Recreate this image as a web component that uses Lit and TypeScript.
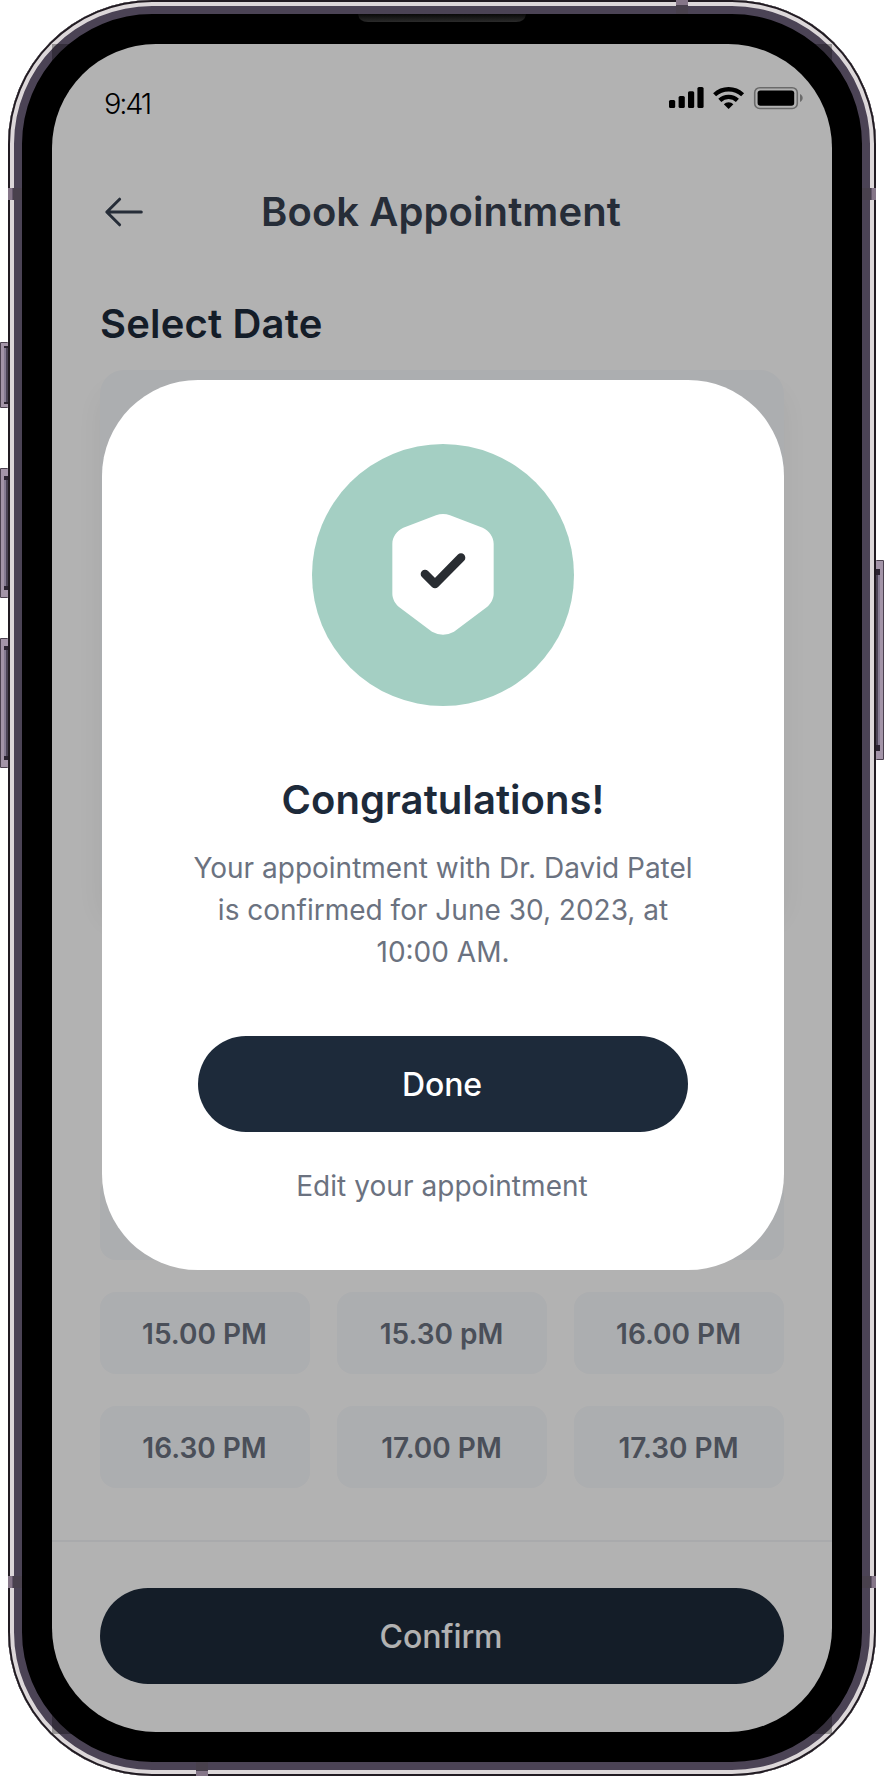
import { LitElement, html, css, svg } from "lit";
import { customElement, property } from "lit/decorators.js";

@customElement("status-icons")
class StatusIcons extends LitElement {
  static styles = css`
    :host { display: block; height: 22px; }
    svg { display: block; }
  `;
  render() {
    return html`
      <svg width="136" height="24" viewBox="668 86 136 24" fill="#000">
        <rect x="669" y="100" width="6.2" height="8" rx="1.6" />
        <rect x="678.6" y="96" width="6.2" height="12" rx="1.6" />
        <rect x="688" y="91.2" width="6.2" height="16.8" rx="1.6" />
        <rect x="697.4" y="87" width="6.2" height="21" rx="1.6" />
        <g fill="none" stroke="#000" stroke-width="4.3">
          <path d="M714.6 94.8 A20.4 20.4 0 0 1 742.6 94.8" />
          <path d="M719.8 100.4 A12.6 12.6 0 0 1 737.4 100.4" />
        </g>
        <path d="M728.6 109 L723.8 104.2 A6.8 6.8 0 0 1 733.4 104.2 Z" />
        <rect x="754.7" y="87.7" width="42.6" height="20.8" rx="5" fill="none" stroke="#000" stroke-opacity=".4" stroke-width="1.6" />
        <rect x="757.6" y="90.4" width="36.6" height="15.4" rx="2.8" />
        <path d="M800 94 C803.6 95.6 803.6 100.4 800 102 Z" fill-opacity=".4" />
      </svg>
    `;
  }
}

@customElement("success-badge")
class SuccessBadge extends LitElement {
  static styles = css`
    :host { display: block; width: 262px; height: 262px; }
    svg { display: block; }
  `;
  render() {
    return html`
      <svg width="262" height="262" viewBox="0 0 786 786">
        <circle cx="393" cy="393" r="393" fill="#a4cfc3" />
        <g transform="translate(-36 -42)">
          <path
            fill="#fff"
            d="M408 256 Q429 248 450 256 L548 293 C567 301 581 321 581 341 V491 C581 505 573 521 562 530 L462 605 Q429 623 396 605 L296 530 C285 521 277 505 277 491 V341 C277 321 291 301 310 293 Z"
          />
          <path d="M375 432 L405 462 L483 383" fill="none" stroke="#292d32" stroke-width="26" stroke-linecap="round" stroke-linejoin="round" />
        </g>
      </svg>
    `;
  }
}

@customElement("pill-button")
class PillButton extends LitElement {
  @property() label = "";
  static styles = css`
    :host { display: block; }
    .pill {
      display: flex;
      width: 100%;
      height: 96px;
      box-sizing: border-box;
      align-items: center;
      justify-content: center;
      border: 0;
      padding: 2px 2px 0 0;
      border-radius: 48px;
      background: #1d2a3a;
      color: #fff;
      font: 500 32px/48px Inter, sans-serif;
      letter-spacing: -0.1px;
    }
  `;
  render() {
    return html`<button class="pill">${this.label}</button>`;
  }
}

@customElement("confirm-dialog")
class ConfirmDialog extends LitElement {
  static styles = css`
    :host {
      display: flex;
      box-sizing: border-box;
      height: 890px;
      flex-direction: column;
      align-items: center;
      padding-top: 64px;
      border-radius: 96px;
      background: #fff;
      text-align: center;
    }
    .title { margin: 64px 0 0; font-weight: 600; font-size: 40px; line-height: 60px; letter-spacing: 0.05px; color: #1d2a3a; }
    .message { width: 520px; margin: 17px 0 0; font-size: 28px; line-height: 42px; color: #6b7280; }
    .done { width: 490px; margin-top: 63px; }
    .edit { margin-top: 33px; padding-right: 2px; font-size: 28px; line-height: 42px; letter-spacing: 0.05px; color: #6b7280; }
  `;
  render() {
    return html`
      <success-badge></success-badge>
      <h2 class="title">Congratulations!</h2>
      <p class="message">
        Your appointment with Dr. David Patel<br />is confirmed for June 30, 2023, at<br />10:00 AM.
      </p>
      <pill-button class="done" label="Done"></pill-button>
      <div class="edit">Edit your appointment</div>
    `;
  }
}

@customElement("booking-screen")
class BookingScreen extends LitElement {
  slots = ["15.00 PM", "15.30 pM", "16.00 PM", "16.30 PM", "17.00 PM", "17.30 PM"];

  static styles = css`
    :host { display: flex; flex-direction: column; height: 100%; background: #fff; }
    .status { display: flex; height: 117px; box-sizing: border-box; padding: 38px 28px 0 52px; justify-content: space-between; }
    .clock { margin-top: 1px; font-weight: 300; font-size: 29px; line-height: 42px; letter-spacing: -2.2px; color: #000; }
    .icons { margin-top: 4px; }
    .header { display: grid; height: 102px; grid-template-columns: 1fr auto 1fr; align-items: center; padding: 0 54px 0 52px; }
    .back { display: block; }
    .heading { margin: 0; font-weight: 600; font-size: 40px; line-height: 60px; letter-spacing: 0.08px; color: #374151; }
    .body { display: flex; flex: 1; flex-direction: column; padding: 31px 48px 0; }
    .section { margin: 0; font-weight: 600; font-size: 40px; line-height: 60px; letter-spacing: 0.18px; color: #1d2a3a; }
    .calendar { height: 534px; margin-top: 16px; border-radius: 24px; background: #f7f9fc; box-shadow: 0 20px 26px rgba(0, 0, 0, 0.06); }
    .times { display: grid; margin-top: auto; margin-bottom: 52px; grid-template-columns: repeat(3, 1fr); gap: 32px 27px; }
    .time, .covered {
      display: flex;
      height: 82px;
      box-sizing: border-box;
      align-items: center;
      justify-content: center;
      padding: 2px 1px 0 0;
      border-radius: 16px;
      background: #f7f9fc;
      font-weight: 600;
      font-size: 28px;
      color: #6b7280;
    }
    .footer { height: 192px; box-sizing: border-box; padding: 46px 48px 0; border-top: 2px solid #f3f4f6; }
  `;

  render() {
    return html`
      <div class="status">
        <span class="clock">9:41</span>
        <status-icons class="icons"></status-icons>
      </div>
      <div class="header">
        <svg class="back" width="40" height="30" viewBox="0 0 40 30" fill="none" stroke="#374151" stroke-width="3" stroke-linecap="round" stroke-linejoin="round">
          <path d="M15.6 2.2 L2.8 15 L15.6 27.8 M3.5 15 H37.3" />
        </svg>
        <h1 class="heading">Book Appointment</h1>
      </div>
      <div class="body">
        <h2 class="section">Select Date</h2>
        <div class="calendar"></div>
        <div class="times">
          <div class="covered"></div>
          <div class="covered"></div>
          <div class="covered"></div>
          ${this.slots.map((t) => html`<div class="time">${t}</div>`)}
        </div>
      </div>
      <div class="footer"><pill-button label="Confirm"></pill-button></div>
    `;
  }
}

@customElement("phone-hardware")
class PhoneHardware extends LitElement {
  static styles = css`
    :host { display: block; }
    svg { display: block; }
  `;

  // A side key with its groove and the two dark end nubs.
  key(y: number, h: number, nub: number, nubH: number) {
    return svg`
      <rect x="0" y=${y} width="8" height=${h} rx="1" fill="#4b404f" />
      <rect x="1" y=${y + 1} width="7" height=${h - 2} fill="#a394a8" />
      <rect x="4" y=${y + nub} width="2" height=${h - 2 * nub} fill="#857a92" />
      <rect x="6" y=${y + nub} width="2" height=${h - 2 * nub} fill="#4b4355" />
      <rect x="4" y=${y + nub} width="4" height=${nubH} fill="#2b2331" />
      <rect x="4" y=${y + h - nub - nubH} width="4" height=${nubH} fill="#2b2331" />
    `;
  }

  // Antenna band crossing the left rail.
  band(y: number) {
    return svg`
      <rect x="8" y=${y} width="4" height="12" fill="#857688" />
      <rect x="12" y=${y} width="1" height="12" fill="#63566a" />
      <rect x="13" y=${y} width="9" height="12" fill="#49414d" />
    `;
  }

  render() {
    return html`
      <svg width="884" height="1776" viewBox="0 0 884 1776">
        <defs>
          <linearGradient id="speaker" x1="0" y1="0" x2="0" y2="1">
            <stop offset="0" stop-color="#090909" />
            <stop offset="1" stop-color="#2b2b2b" />
          </linearGradient>
        </defs>
        ${this.key(342, 66, 4, 2)} ${this.key(468, 130, 8, 4)} ${this.key(638, 130, 8, 4)}
        <g transform="translate(884 0) scale(-1 1)">${this.key(560, 200, 9, 6)}</g>
        ${this.band(188)} ${this.band(1576)}
        <g transform="translate(884 0) scale(-1 1)">${this.band(188)} ${this.band(1576)}</g>
        <rect x="676" y="0" width="12" height="5" fill="#857688" />
        <rect x="676" y="5" width="12" height="9" fill="#49414d" />
        <rect x="196" y="1762" width="12" height="9" fill="#49414d" />
        <rect x="196" y="1771" width="12" height="5" fill="#857688" />
        <path d="M358 14 H526 Q525 22 516 22 H368 Q359 22 358 14 Z" fill="url(#speaker)" />
      </svg>
    `;
  }
}

@customElement("app-root")
class AppRoot extends LitElement {
  static styles = css`
    :host {
      display: block;
      position: relative;
      width: 884px;
      height: 1776px;
      overflow: hidden;
      background: #fff;
      font-family: Inter, sans-serif;
    }
    .frame {
      box-sizing: border-box;
      height: 1776px;
      margin: 0 8px;
      padding: 44px;
      border-radius: 144px;
      background: #000;
      box-shadow: inset 0 0 0 2px #211b22, inset 0 0 0 6px #dcd7d9, inset 0 0 0 14px #4b4355;
    }
    .screen { height: 1688px; overflow: hidden; border-radius: 104px; }
    .hardware { position: absolute; inset: 0; }
    .scrim {
      position: absolute;
      left: 52px;
      top: 44px;
      width: 780px;
      height: 1690px;
      box-sizing: border-box;
      padding: 336px 48px 0 50px;
      background: rgba(0, 0, 0, 0.3);
    }
  `;
  render() {
    return html`
      <div class="frame">
        <div class="screen"><booking-screen></booking-screen></div>
      </div>
      <phone-hardware class="hardware"></phone-hardware>
      <div class="scrim"><confirm-dialog></confirm-dialog></div>
    `;
  }
}
